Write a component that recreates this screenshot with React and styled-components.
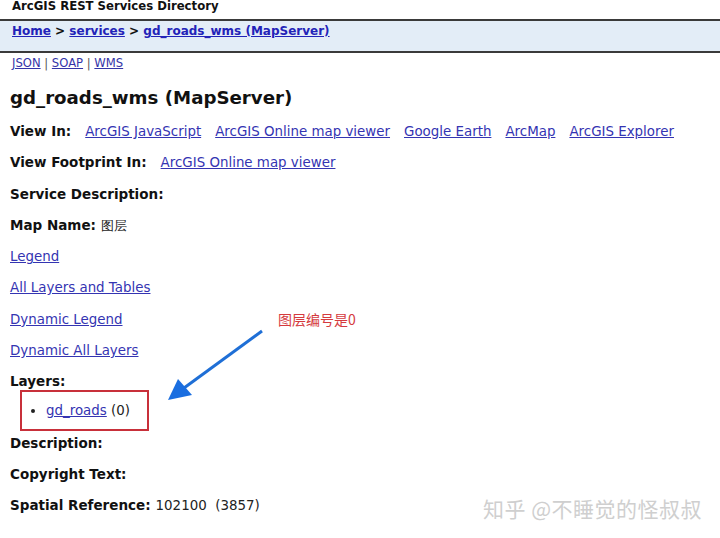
import styled, { createGlobalStyle } from "styled-components";

const GlobalStyle = createGlobalStyle`
	body {
		margin: 0;
		background: #ffffff;
		font-family: "DejaVu Sans", Verdana, sans-serif;
		color: #222222;
	}
`;

const viewers = [
	"ArcGIS JavaScript",
	"ArcGIS Online map viewer",
	"Google Earth",
	"ArcMap",
	"ArcGIS Explorer",
];

const App = () => {
	return (
		<Page>
			<GlobalStyle />
			<TopTitle>ArcGIS REST Services Directory</TopTitle>
			<NavBar>
				<NavLink href="#">Home</NavLink> &gt; <NavLink href="#">services</NavLink>{" "}
				&gt; <NavLink href="#">gd_roads_wms (MapServer)</NavLink>
			</NavBar>
			<Formats>
				<SmallLink href="#">JSON</SmallLink> | <SmallLink href="#">SOAP</SmallLink> |{" "}
				<SmallLink href="#">WMS</SmallLink>
			</Formats>
			<Content>
				<Heading>gd_roads_wms (MapServer)</Heading>
				<Row>
					<Label>View In:</Label>
					<LinkGroup>
						{viewers.map((v) => (
							<Link key={v} href="#">
								{v}
							</Link>
						))}
					</LinkGroup>
				</Row>
				<Row>
					<Label>View Footprint In:</Label>
					<LinkGroup>
						<Link href="#">ArcGIS Online map viewer</Link>
					</LinkGroup>
				</Row>
				<Row>
					<Label>Service Description:</Label>
				</Row>
				<Row>
					<Label>Map Name:</Label>图层
				</Row>
				<Row>
					<Link href="#">Legend</Link>
				</Row>
				<Row>
					<Link href="#">All Layers and Tables</Link>
				</Row>
				<Row>
					<Link href="#">Dynamic Legend</Link>
				</Row>
				<Row>
					<Link href="#">Dynamic All Layers</Link>
				</Row>
				<Row>
					<Label>Layers:</Label>
				</Row>
				<LayerBox>
					<LayerList>
						<li>
							<Link href="#">gd_roads</Link> (0)
						</li>
					</LayerList>
				</LayerBox>
				<Row>
					<Label>Description:</Label>
				</Row>
				<Row>
					<Label>Copyright Text:</Label>
				</Row>
				<Row>
					<Label>Spatial Reference:</Label>102100&nbsp; (3857)
				</Row>
			</Content>

			<Note>图层编号是0</Note>
			<Arrow width="110" height="80" viewBox="0 0 110 80">
				<line x1="96" y1="6" x2="18" y2="63" stroke="#1f6fd6" strokeWidth="3" />
				<polygon points="2,75 12,54 26,70" fill="#1a6ee0" />
			</Arrow>
			<Watermark>知乎 @不睡觉的怪叔叔</Watermark>
		</Page>
	);
};
export default App;

const Page = styled.div`
	position: relative;
	width: 720px;
	height: 538px;
	overflow: hidden;
`;

const TopTitle = styled.div`
	padding: 0 12px;
	height: 14px;
	font-size: 11.7px;
	font-weight: bold;
	line-height: 12px;
	color: #111;
`;

const NavBar = styled.div`
	margin-top: 5px;
	height: 28px;
	padding: 2px 12px 0;
	background: #e3edf7;
	border-top: 2px solid #3a3a3a;
	border-bottom: 2px solid #3a3a3a;
	font-size: 12px;
	font-weight: bold;
	line-height: 16px;
	color: #111;
`;

const NavLink = styled.a`
	color: #2323b8;
	text-decoration: underline;
`;

const Formats = styled.div`
	padding: 3px 12px 0;
	font-size: 11.6px;
	line-height: 14px;
	color: #555;
`;

const SmallLink = styled.a`
	color: #3434a8;
`;

const Content = styled.div`
	padding: 0 10px;
	font-size: 13.4px;
`;

const Heading = styled.h2`
	margin: 16px 0 6px;
	font-size: 18.2px;
	line-height: 24px;
	font-weight: bold;
	color: #111;
`;

const Row = styled.div`
	height: 31.3px;
	line-height: 31px;
	white-space: nowrap;
`;

const Label = styled.b`
	color: #111;
	margin-right: 5px;
	font-size: 13.5px;
`;

const LinkGroup = styled.span`
	display: inline-flex;
	gap: 14px;
	margin-left: 9px;
`;

const Link = styled.a`
	color: #3434b2;
	text-decoration: underline;
`;

const LayerBox = styled.div`
	display: block;
	margin: -8px 0 -3px 10px;
	width: 129px;
	height: 41px;
	border: 2px solid #c8303a;
	box-sizing: border-box;
`;

const LayerList = styled.ul`
	margin: 0;
	padding: 0 0 0 24px;
	line-height: 37px;
`;

const Note = styled.div`
	position: absolute;
	left: 278px;
	top: 309px;
	font-family: "Noto Sans CJK SC", sans-serif;
	font-size: 14px;
	color: #d53a3e;
`;

const Arrow = styled.svg`
	position: absolute;
	left: 166px;
	top: 325px;
`;

const Watermark = styled.div`
	position: absolute;
	left: 483px;
	top: 493px;
	font-family: "Noto Sans CJK SC", sans-serif;
	font-size: 21px;
	color: #cfcfcf;
	letter-spacing: 0.5px;
`;
